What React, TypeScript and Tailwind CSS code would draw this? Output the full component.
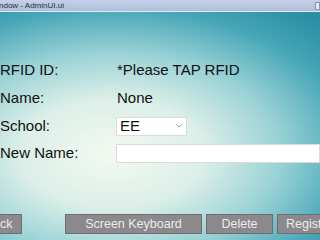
export default function App() {
  const rows = [
    { label: 'RFID ID:', value: '*Please TAP RFID' },
    { label: 'Name:', value: 'None' },
  ];

  return (
    <div className="w-[320px] h-[240px] overflow-hidden flex flex-col font-['Liberation_Sans',Arial,sans-serif] text-[#111]">
      {/* Title bar */}
      <div className="h-[12px] shrink-0 flex items-center justify-between bg-[linear-gradient(#c4d0e6,#aebfdc)] border-b border-[#dfe8f3]">
        <span className="text-[8px] leading-none text-[#2a2f45] -ml-[1px]">ndow - AdminUI.ui</span>
        <span className="w-[5px] h-[8px] border border-[#8a97b3] bg-[#e3e9f4]" />
      </div>

      {/* Form area */}
      <div className="flex-1 flex flex-col bg-[radial-gradient(ellipse_95%_80%_at_35%_62%,#f3f9f1_0%,#dcefe8_30%,#9ad2d6_55%,#46a5b7_80%,#2b8ea4_100%)]">
        <div className="flex flex-col pt-[44px]">
          {rows.map((r) => (
            <div key={r.label} className="h-[28px] flex items-center text-[15px]">
              <span className="w-[117px] shrink-0">{r.label}</span>
              <span>{r.value}</span>
            </div>
          ))}
          <div className="h-[28px] flex items-center text-[15px]">
            <span className="w-[116px] shrink-0">School:</span>
            <div className="w-[71px] h-[19px] bg-white border border-[#d8dcdc] flex items-center justify-between pl-[3px] pr-[4px]">
              <span>EE</span>
              <svg width="6" height="4" viewBox="0 0 6 4" className="text-[#a0a0a0]">
                <path d="M0.5 0.5 L3 3 L5.5 0.5" fill="none" stroke="currentColor" strokeWidth="1" />
              </svg>
            </div>
          </div>
          <div className="h-[27px] flex items-center text-[15px]">
            <span className="w-[116px] shrink-0">New Name:</span>
            <div className="flex-1 h-[19px] bg-white border border-[#d8dcdc]" />
          </div>
        </div>

        {/* Buttons */}
        <div className="mt-auto mb-[6px] flex gap-[4px] text-[12.5px] text-[#ececec]">
          <button className="-ml-[25px] w-[47px] h-[20px] shrink-0 bg-[#8b898b] border border-[#6e6e70] leading-none">Back</button>
          <button className="ml-[39px] w-[137px] h-[20px] shrink-0 bg-[#8b898b] border border-[#6e6e70] leading-none">Screen Keyboard</button>
          <button className="w-[67px] h-[20px] shrink-0 bg-[#8b898b] border border-[#6e6e70] leading-none">Delete</button>
          <button className="w-[70px] h-[20px] shrink-0 bg-[#8b898b] border border-[#6e6e70] leading-none text-left pl-[8px]">Register</button>
        </div>
      </div>
    </div>
  );
}
